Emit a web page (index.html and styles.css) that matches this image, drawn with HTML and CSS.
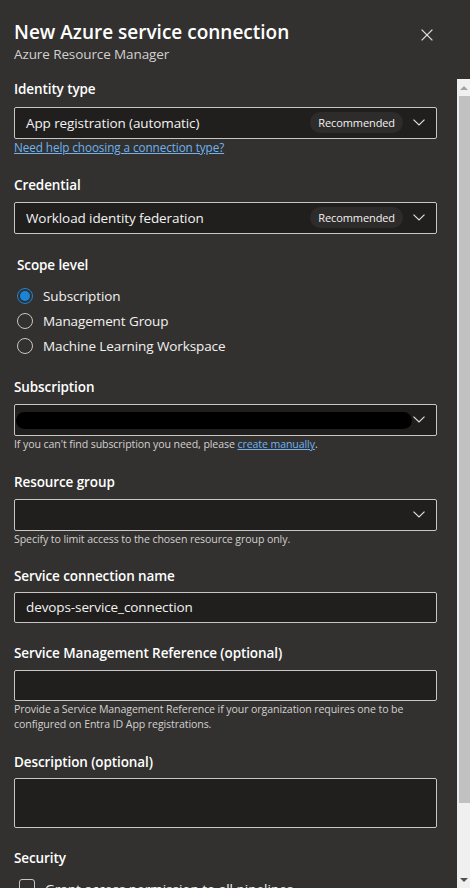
FILE: index.html
```
<!DOCTYPE html>
<html lang="en">
<head>
<meta charset="utf-8">
<title>New Azure service connection</title>
<link rel="stylesheet" href="styles.css">
</head>
<body>
<div class="panel">
  <header class="header">
    <div class="titles">
      <div class="title">New Azure service connection</div>
      <div class="subtitle">Azure Resource Manager</div>
    </div>
    <button class="close" aria-label="Close">
      <svg width="12" height="12" viewBox="0 0 12 12"><path d="M0.6 0.6 L11.4 11.4 M11.4 0.6 L0.6 11.4" stroke="#e1dfdd" stroke-width="1.3" fill="none"/></svg>
    </button>
  </header>
  <div class="body">
    <div class="content">
      <div class="label l-identity">Identity type</div>
      <div class="dropdown">
        <span class="value">App registration (automatic)</span>
        <span class="badge">Recommended</span>
        <svg class="chev" width="12" height="7" viewBox="0 0 12 7"><path d="M0.5 0.6 L6 6 L11.5 0.6" stroke="#e1dfdd" stroke-width="1.2" fill="none"/></svg>
      </div>
      <a class="link help-link" href="#">Need help choosing a connection type?</a>

      <div class="label l-cred">Credential</div>
      <div class="dropdown">
        <span class="value">Workload identity federation</span>
        <span class="badge">Recommended</span>
        <svg class="chev" width="12" height="7" viewBox="0 0 12 7"><path d="M0.5 0.6 L6 6 L11.5 0.6" stroke="#e1dfdd" stroke-width="1.2" fill="none"/></svg>
      </div>

      <div class="scope">
        <div class="label l-scope">Scope level</div>
        <div class="radios">
          <div class="radio checked"><span class="circle"></span><span>Subscription</span></div>
          <div class="radio"><span class="circle"></span><span>Management Group</span></div>
          <div class="radio"><span class="circle"></span><span>Machine Learning Workspace</span></div>
        </div>
      </div>

      <div class="label l-sub">Subscription</div>
      <div class="dropdown">
        <span class="value redacted-wrap"><span class="redacted"></span></span>
        <svg class="chev" width="12" height="7" viewBox="0 0 12 7"><path d="M0.5 0.6 L6 6 L11.5 0.6" stroke="#e1dfdd" stroke-width="1.2" fill="none"/></svg>
      </div>
      <div class="help">If you can't find subscription you need, please <a class="link" href="#">create manually</a>.</div>

      <div class="label l-rg">Resource group</div>
      <div class="dropdown">
        <span class="value"></span>
        <svg class="chev" width="12" height="7" viewBox="0 0 12 7"><path d="M0.5 0.6 L6 6 L11.5 0.6" stroke="#e1dfdd" stroke-width="1.2" fill="none"/></svg>
      </div>
      <div class="help">Specify to limit access to the chosen resource group only.</div>

      <div class="label l-name">Service connection name</div>
      <div class="input">devops-service_connection</div>

      <div class="label l-smr">Service Management Reference (optional)</div>
      <div class="input"></div>
      <div class="help">Provide a Service Management Reference if your organization requires one to be configured on Entra ID App registrations.</div>

      <div class="label l-desc">Description (optional)</div>
      <div class="textarea"></div>

      <div class="label l-sec">Security</div>
      <div class="check"><span class="box"></span><span>Grant access permission to all pipelines</span></div>
    </div>
    <div class="scrollbar">
      <div class="sb-btn"><span class="tri-up"></span></div>
      <div class="sb-thumb"></div>
      <div class="sb-space"></div>
      <div class="sb-btn"><span class="tri-down"></span></div>
    </div>
  </div>
</div>
</body>
</html>
```
FILE: styles.css
```
* { box-sizing: border-box; }
html, body { margin: 0; padding: 0; }
body {
  background: #323130;
  font-family: "Open Sans", "Noto Sans", sans-serif;
  color: #f3f2f1;
  width: 470px;
  height: 888px;
  overflow: hidden;
}
.panel { display: flex; flex-direction: column; height: 888px; }
.header {
  height: 79px;
  padding: 19px 37px 0 14px;
  display: flex;
  justify-content: space-between;
  align-items: flex-start;
  flex: none;
}
.title {
  font-size: 19px;
  font-weight: 600;
  line-height: 26px;
  color: #ffffff;
}
.subtitle {
  font-size: 13.5px;
  line-height: 18px;
  color: #d2d0ce;
  letter-spacing: -0.1px;
}
.close {
  background: none;
  border: 0;
  padding: 0;
  margin-top: 10px;
  width: 12px;
  height: 12px;
  display: flex;
}
.body {
  flex: 1;
  display: flex;
  min-height: 0;
}
.content {
  flex: 1;
  padding: 0 20px 0 14px;
  overflow: hidden;
  display: flex;
  flex-direction: column;
}
.content > * { flex: none; }
.label {
  font-size: 13.5px;
  font-weight: 600;
  line-height: 20px;
  color: #ffffff;
  margin-bottom: 7px;
  letter-spacing: -0.1px;
}
.l-identity { margin-bottom: 8px; }
.l-cred { margin-top: 20px; }
.l-scope { margin: 21px 0 8px 3px; }
.l-sub { margin-top: 19px; }
.l-rg { margin-top: 20px; }
.l-name { margin-top: 19px; margin-bottom: 6px; }
.l-smr { margin-top: 20px; }
.l-desc { margin-top: 20px; margin-bottom: 6px; }
.l-sec { margin-top: 20px; margin-bottom: 11px; }

.dropdown, .input, .textarea {
  background: #201f1e;
  border: 1px solid #c8c6c4;
  border-radius: 2px;
}
.dropdown {
  height: 32px;
  display: flex;
  align-items: center;
  padding: 0 11px 1px;
  font-size: 13.5px;
  letter-spacing: -0.1px;
}
.dropdown .value { flex: 1; color: #f3f2f1; white-space: nowrap; }
.badge {
  background: #2d2c2b;
  border-radius: 11px;
  height: 21px;
  line-height: 21px;
  padding: 0 8px;
  font-size: 11px;
  color: #f3f2f1;
  margin-right: 10px;
  letter-spacing: -0.1px;
}
.chev { flex: none; display: block; }
.redacted-wrap { display: flex; margin-left: -10px; }
.redacted {
  display: block;
  width: 396px;
  height: 17px;
  border-radius: 9px;
  background: #000;
  margin-top: 2px;
}
.input {
  height: 31px;
  padding: 0 11px;
  font-size: 13.5px;
  line-height: 28px;
  letter-spacing: -0.1px;
}
.textarea { height: 50px; }
.link {
  color: #6fb2ee;
  text-decoration: underline;
}
.help-link {
  font-size: 11.75px;
  line-height: 16px;
  align-self: flex-start;
  letter-spacing: -0.1px;
}
.help {
  font-size: 10.6px;
  line-height: 15px;
  padding-top: 1px;
  color: #d2d0ce;
  letter-spacing: -0.1px;
}
.help .link { color: #6fb2ee; }
.radios { display: flex; flex-direction: column; margin-left: 3px; }
.radio {
  height: 25px;
  display: flex;
  align-items: center;
  gap: 10px;
  font-size: 13.5px;
  color: #f3f2f1;
  letter-spacing: -0.1px;
}
.circle {
  width: 16px;
  height: 16px;
  border-radius: 50%;
  border: 1px solid #c8c6c4;
  flex: none;
  display: flex;
  align-items: center;
  justify-content: center;
}
.radio.checked .circle { border: 1.5px solid #1b84d8; }
.radio.checked .circle::after {
  content: "";
  width: 10px;
  height: 10px;
  border-radius: 50%;
  background: #1b84d8;
}
.check {
  display: flex;
  align-items: flex-start;
  gap: 10px;
  margin-left: 5px;
  font-size: 13.5px;
  line-height: 20px;
  color: #f3f2f1;
}
.box {
  width: 16px;
  height: 16px;
  border: 1px solid #c8c6c4;
  border-radius: 3px;
  flex: none;
}
.scrollbar {
  width: 13px;
  flex: none;
  background: #f0f0f0;
  display: flex;
  flex-direction: column;
}
.sb-btn {
  height: 17px;
  display: flex;
  align-items: center;
  justify-content: center;
  flex: none;
}
.sb-thumb {
  height: 707px;
  margin-left: 2px;
  background: #c1c1c1;
  flex: none;
}
.sb-space { flex: 1; }
.tri-up {
  width: 0; height: 0;
  border-left: 4px solid transparent;
  border-right: 4px solid transparent;
  border-bottom: 4px solid #a3a3a3;
}
.tri-down {
  width: 0; height: 0;
  border-left: 4px solid transparent;
  border-right: 4px solid transparent;
  border-top: 4px solid #505050;
}
```
